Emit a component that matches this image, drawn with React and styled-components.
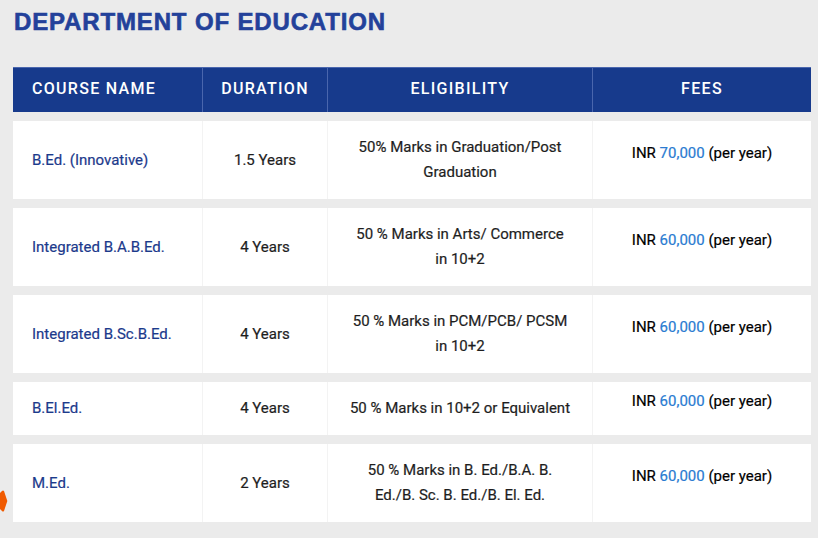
import React from 'react';
import styled, { createGlobalStyle } from 'styled-components';

const GlobalStyle = createGlobalStyle`
    html, body {
        margin: 0;
        padding: 0;
        background: #ebebeb;
    }
    body {
        font-family: Roboto, "Liberation Sans", Arial, sans-serif;
    }
`

const Page = styled.div`
    padding: 9px 7px 0 13px;
`

const Title = styled.h2`
    margin: 0 0 0 1px;
    color: #23419a;
    font-family: "Liberation Sans", Arial, sans-serif;
    font-size: 24px;
    font-weight: 700;
    letter-spacing: 0.85px;
    line-height: 26px;
    -webkit-text-stroke: 0.6px #23419a;
`

const Table = styled.table`
    width: 798px;
    margin-top: 23px;
    border-collapse: separate;
    border-spacing: 0 9px;
    table-layout: fixed;
`

const HeadCell = styled.th`
    height: 45px;
    padding: 0 0 4px;
    box-sizing: border-box;
    background: #173a8c;
    color: #ffffff;
    font-size: 16px;
    font-weight: 500;
    letter-spacing: 1.3px;
    text-align: ${p => p.$left ? 'left' : 'center'};
    padding-left: ${p => p.$left ? '19px' : '0'};
    border-left: ${p => p.$first ? 'none' : '1px solid #4a66ad'};
    border-top: 1px solid #4a66ad;
`

const Cell = styled.td`
    background: #ffffff;
    padding: 14px 10px;
    font-size: 15px;
    font-weight: 400;
    line-height: 25px;
    color: #1e1e1e;
    text-align: center;
    vertical-align: middle;
    border-left: 1px solid #f3f3f3;
    -webkit-text-stroke: 0.2px currentColor;
    &:first-child {
        border-left: none;
    }
`

const NameCell = styled(Cell)`
    text-align: left;
    padding-left: 19px;
    color: #1c3a8c;
`

const FeesCell = styled(Cell)`
    color: #000000;
`

const FeesText = styled.div`
    margin-top: -14px;
`

const Amount = styled.span`
    color: #2a7bd1;
`

const SideTab = styled.svg`
    position: absolute;
    left: 0;
    top: 488px;
`

const courses = [
    { name: 'B.Ed. (Innovative)', duration: '1.5 Years', eligibility: ['50% Marks in Graduation/Post', 'Graduation'], fee: '70,000' },
    { name: 'Integrated B.A.B.Ed.', duration: '4 Years', eligibility: ['50 % Marks in Arts/ Commerce', 'in 10+2'], fee: '60,000' },
    { name: 'Integrated B.Sc.B.Ed.', duration: '4 Years', eligibility: ['50 % Marks in PCM/PCB/ PCSM', 'in 10+2'], fee: '60,000' },
    { name: 'B.El.Ed.', duration: '4 Years', eligibility: ['50 % Marks in 10+2 or Equivalent'], fee: '60,000' },
    { name: 'M.Ed.', duration: '2 Years', eligibility: ['50 % Marks in B. Ed./B.A. B.', 'Ed./B. Sc. B. Ed./B. El. Ed.'], fee: '60,000' },
]

class App extends React.Component {
    render() {
        return (
            <Page>
                <GlobalStyle />
                <Title>DEPARTMENT OF EDUCATION</Title>
                <Table>
                    <colgroup>
                        <col style={{ width: '189px' }} />
                        <col style={{ width: '125px' }} />
                        <col style={{ width: '265px' }} />
                        <col style={{ width: '219px' }} />
                    </colgroup>
                    <thead>
                        <tr>
                            <HeadCell $left $first>COURSE NAME</HeadCell>
                            <HeadCell>DURATION</HeadCell>
                            <HeadCell>ELIGIBILITY</HeadCell>
                            <HeadCell>FEES</HeadCell>
                        </tr>
                    </thead>
                    <tbody>
                        {courses.map(c => (
                            <tr key={c.name}>
                                <NameCell>{c.name}</NameCell>
                                <Cell>{c.duration}</Cell>
                                <Cell>
                                    {c.eligibility.map((line, i) => (
                                        <React.Fragment key={i}>
                                            {i > 0 && <br />}
                                            {line}
                                        </React.Fragment>
                                    ))}
                                </Cell>
                                <FeesCell>
                                    <FeesText>
                                        INR <Amount>{c.fee}</Amount> (per year)
                                    </FeesText>
                                </FeesCell>
                            </tr>
                        ))}
                    </tbody>
                </Table>
                <SideTab width="10" height="26" viewBox="0 0 10 26">
                    <path d="M-8 13 L2 3 Q3 2 4 3 L7 12 Q7.5 13 7 14 L4 23 Q3 24 2 23 Z" fill="#f05a00" />
                </SideTab>
            </Page>
        )
    }
}

export default App
